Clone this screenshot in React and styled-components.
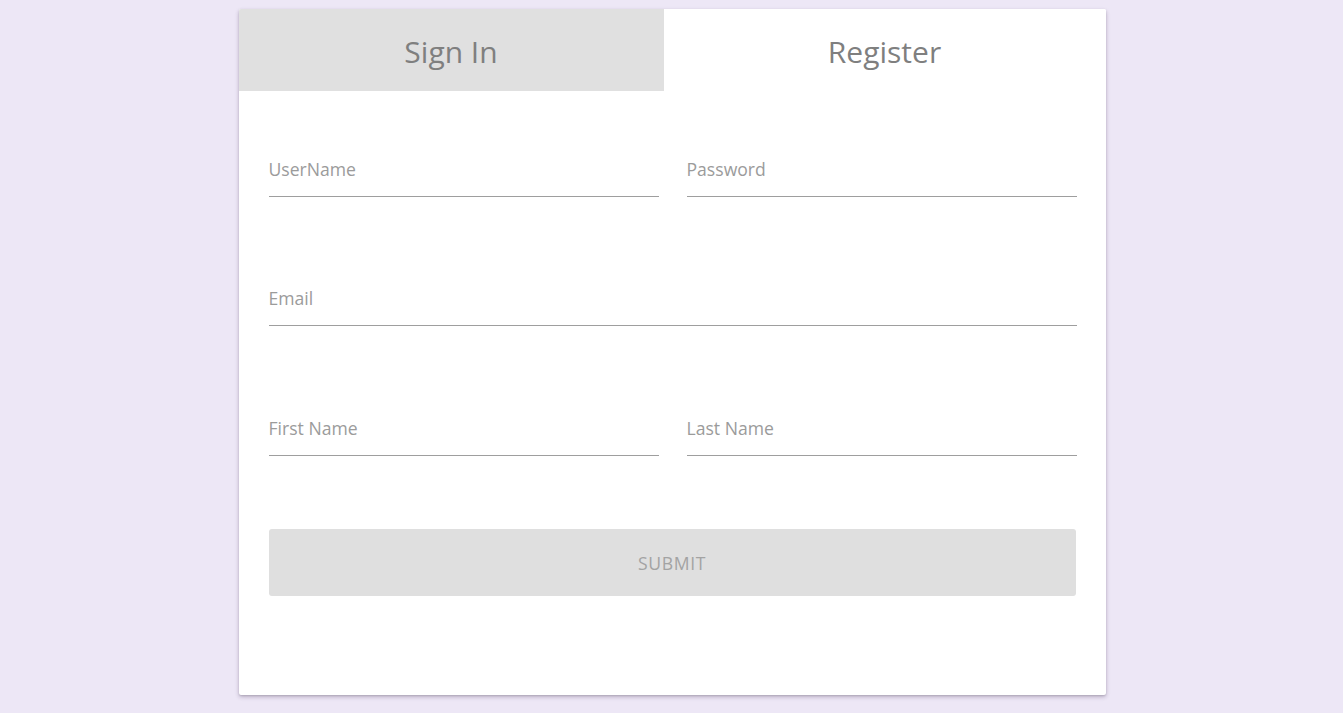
import React from "react";
import styled, { createGlobalStyle } from "styled-components";

const GlobalStyle = createGlobalStyle`
  html, body {
    margin: 0;
    padding: 0;
    background: #ede7f6;
    font-family: "Open Sans", "Noto Sans", "Liberation Sans", sans-serif;
  }
  * { box-sizing: border-box; }
`;

const Page = styled.div`
  display: flex;
  justify-content: center;
  padding-top: 9px;
  padding-left: 1px;
  min-height: 713px;
`;

const Card = styled.div`
  width: 867px;
  height: 686px;
  background: #ffffff;
  border-radius: 2px;
  box-shadow: 0 2px 4px rgba(60, 40, 80, 0.28), 0 1px 2px rgba(0, 0, 0, 0.12);
  overflow: hidden;
  display: flex;
  flex-direction: column;
`;

const Tabs = styled.div`
  display: grid;
  grid-template-columns: 425px 1fr;
  height: 82px;
`;

const Tab = styled.div`
  display: flex;
  align-items: center;
  justify-content: center;
  padding-top: 2px;
  font-size: 30px;
  color: #7f7f7f;
  background: ${(p) => (p.$active ? "#ffffff" : "#e0e0e0")};
`;

const Form = styled.form`
  display: flex;
  flex-direction: column;
  padding: 58px 29px 0 30px;
`;

const Row = styled.div`
  display: grid;
  grid-template-columns: ${(p) => (p.$single ? "1fr" : "1fr 1fr")};
  column-gap: 28px;
  margin-bottom: ${(p) => p.$gap}px;
`;

const Field = styled.div`
  height: 48px;
  display: flex;
  align-items: flex-end;
  padding-bottom: 15px;
  border-bottom: 1px solid #9e9e9e;
`;

const Label = styled.span`
  font-size: 17.6px;
  line-height: 24px;
  color: #9b9b9b;
`;

const Submit = styled.button`
  height: 67px;
  width: 807px;
  border: none;
  border-radius: 3px;
  background: #dfdfdf;
  color: #a3a3a3;
  font-family: inherit;
  font-size: 17.6px;
  letter-spacing: 0.6px;
  text-transform: uppercase;
  padding-top: 2px;
  cursor: default;
`;

export default function App() {
  return (
    <>
      <GlobalStyle />
      <Page>
        <Card>
          <Tabs>
            <Tab>Sign In</Tab>
            <Tab $active>Register</Tab>
          </Tabs>
          <Form onSubmit={(e) => e.preventDefault()}>
            <Row $gap={81}>
              <Field><Label>UserName</Label></Field>
              <Field><Label>Password</Label></Field>
            </Row>
            <Row $single $gap={82}>
              <Field><Label>Email</Label></Field>
            </Row>
            <Row $gap={73}>
              <Field><Label>First Name</Label></Field>
              <Field><Label>Last Name</Label></Field>
            </Row>
            <Submit type="button">Submit</Submit>
          </Form>
        </Card>
      </Page>
    </>
  );
}
